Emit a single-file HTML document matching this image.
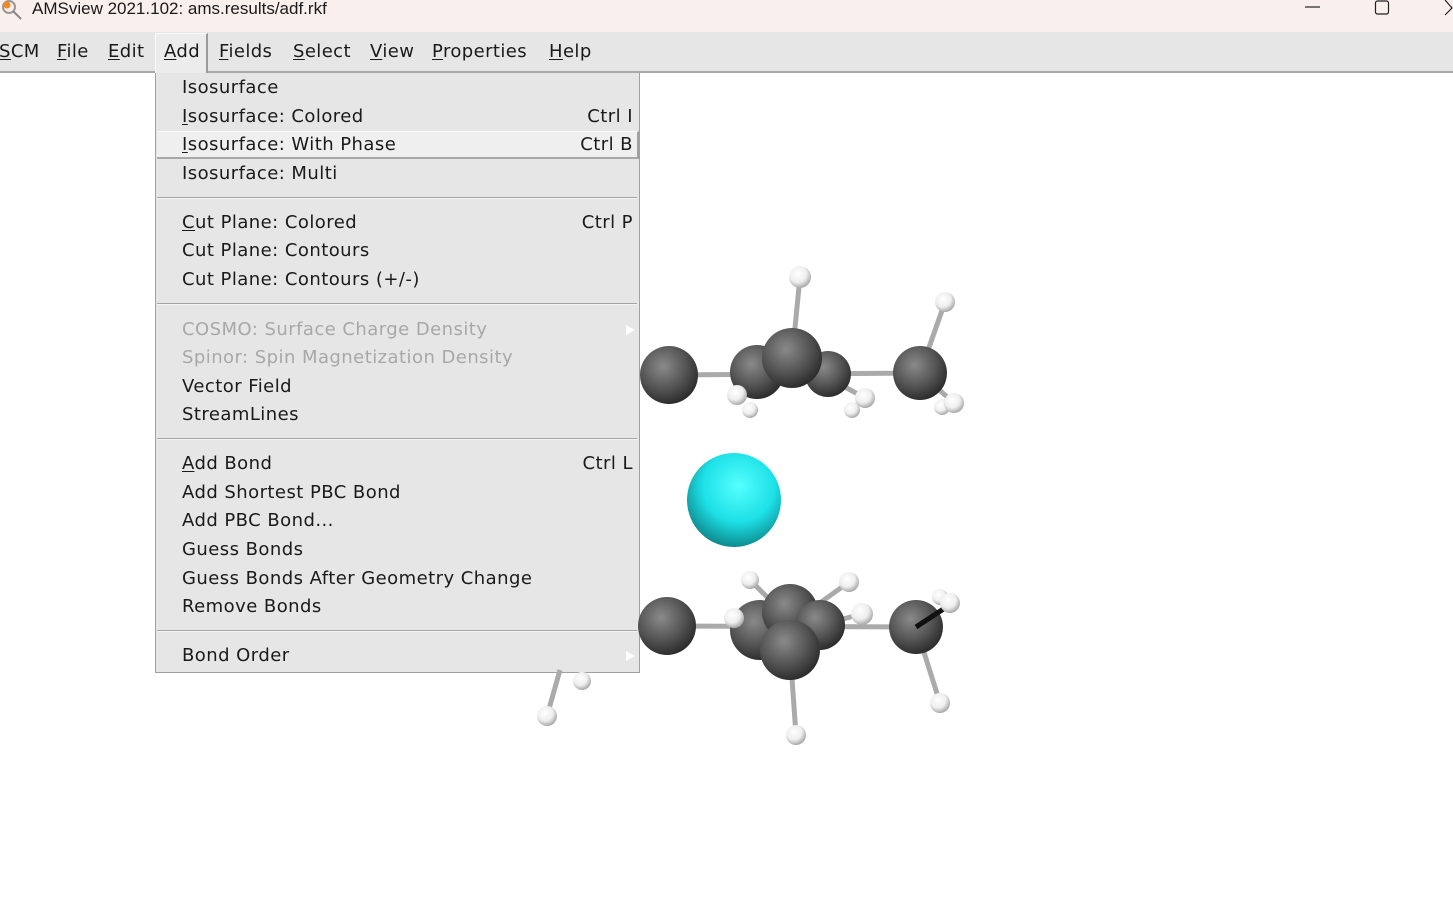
<!DOCTYPE html>
<html><head><meta charset="utf-8"><style>
*{margin:0;padding:0;box-sizing:border-box}
body{width:1453px;height:901px;background:#fff;position:relative;overflow:hidden;font-family:"DejaVu Sans","Liberation Sans",sans-serif;color:#1a1a1a}
#title{position:absolute;left:0;top:0;width:1453px;height:32px;background:#f9efed;font-family:"Liberation Sans",sans-serif;font-size:17px}
#title span{position:absolute;left:32px;top:-1px}
#menubar{position:absolute;left:0;top:32px;width:1453px;height:41px;background:#e6e6e6;border-bottom:2px solid #a8a8a8;font-size:18px;letter-spacing:0.4px}
#menubar span{position:absolute;top:9px}
u{text-decoration:underline;text-underline-offset:2px}
#addbtn{position:absolute;left:155px;top:1px;width:53px;height:40px;background:#ececec;border:1px solid #fafafa;border-right:2px solid #9a9a9a;border-bottom:none}
#menu{position:absolute;left:155px;top:73px;width:485px;height:600px;background:#e6e6e6;border:1px solid #a0a0a0;border-top:none;font-size:18px;letter-spacing:0.45px}
.it{position:absolute;left:26px;white-space:nowrap}
.sc{position:absolute;right:6px;white-space:nowrap}
.dis{color:#a8a8a8}
.sep{position:absolute;left:1px;right:2px;height:2px;border-top:1px solid #a4a4a4;border-bottom:1px solid #f4f4f4}
#hl{position:absolute;left:1px;top:58px;width:482px;height:28px;background:#efefef;border-top:1px solid #fafafa;border-bottom:2px solid #a8a8a8;border-right:2px solid #a0a0a0}
.arr{position:absolute;right:4px;width:0;height:0;border-left:9px solid #fff;border-top:5px solid transparent;border-bottom:5px solid transparent}
</style></head><body>
<div id="title">
<svg style="position:absolute;left:0;top:0" width="24" height="20"><circle cx="9" cy="7" r="6" fill="none" stroke="#999" stroke-width="2"/><circle cx="7" cy="5" r="3.5" fill="#f08a20"/><line x1="13" y1="11" x2="21" y2="19" stroke="#888" stroke-width="2"/></svg>
<span>AMSview 2021.102: ams.results/adf.rkf</span>
<svg style="position:absolute;left:1300px;top:0" width="153" height="20"><line x1="5" y1="7" x2="20" y2="7" stroke="#222" stroke-width="1.2"/><rect x="75.5" y="1" width="13" height="13" rx="2" fill="none" stroke="#222" stroke-width="1.2"/><path d="M145 0 L152 8 L145 15" fill="none" stroke="#222" stroke-width="1.2"/></svg>
</div>
<div id="menubar">
<div id="addbtn"></div>
<span style="left:-1px"><u>S</u>CM</span>
<span style="left:57px"><u>F</u>ile</span>
<span style="left:108px"><u>E</u>dit</span>
<span style="left:164px"><u>A</u>dd</span>
<span style="left:219px"><u>F</u>ields</span>
<span style="left:293px"><u>S</u>elect</span>
<span style="left:370px"><u>V</u>iew</span>
<span style="left:432px"><u>P</u>roperties</span>
<span style="left:549px"><u>H</u>elp</span>
</div>
<div id="menu">
<div id="hl"></div>
<div class="it" style="top:4px">Isosurface</div>
<div class="it" style="top:33px"><u>I</u>sosurface: Colored</div><div class="sc" style="top:33px">Ctrl I</div>
<div class="it" style="top:61px"><u>I</u>sosurface: With Phase</div><div class="sc" style="top:61px">Ctrl B</div>
<div class="it" style="top:90px">Isosurface: Multi</div>
<div class="sep" style="top:124px"></div>
<div class="it" style="top:139px"><u>C</u>ut Plane: Colored</div><div class="sc" style="top:139px">Ctrl P</div>
<div class="it" style="top:167px">Cut Plane: Contours</div>
<div class="it" style="top:196px">Cut Plane: Contours (+/-)</div>
<div class="sep" style="top:230px"></div>
<div class="it dis" style="top:246px">COSMO: Surface Charge Density</div><div class="arr" style="top:252px"></div>
<div class="it dis" style="top:274px">Spinor: Spin Magnetization Density</div>
<div class="it" style="top:303px">Vector Field</div>
<div class="it" style="top:331px">StreamLines</div>
<div class="sep" style="top:365px"></div>
<div class="it" style="top:380px"><u>A</u>dd Bond</div><div class="sc" style="top:380px">Ctrl L</div>
<div class="it" style="top:409px">Add Shortest PBC Bond</div>
<div class="it" style="top:437px">Add PBC Bond...</div>
<div class="it" style="top:466px">Guess Bonds</div>
<div class="it" style="top:495px">Guess Bonds After Geometry Change</div>
<div class="it" style="top:523px">Remove Bonds</div>
<div class="sep" style="top:557px"></div>
<div class="it" style="top:572px">Bond Order</div><div class="arr" style="top:578px"></div>
</div>
<svg style="position:absolute;left:0;top:0" width="1453" height="901">
<defs>
<radialGradient id="c" cx="0.4" cy="0.35" r="0.65"><stop offset="0" stop-color="#8a8a8a"/><stop offset="0.6" stop-color="#555"/><stop offset="1" stop-color="#2e2e2e"/></radialGradient>
<radialGradient id="h" cx="0.4" cy="0.35" r="0.65"><stop offset="0" stop-color="#fff"/><stop offset="0.6" stop-color="#eee"/><stop offset="1" stop-color="#aaa"/></radialGradient>
<radialGradient id="k" cx="0.55" cy="0.35" r="0.7"><stop offset="0" stop-color="#5ff"/><stop offset="0.55" stop-color="#1de0e6"/><stop offset="1" stop-color="#0a7c80"/></radialGradient>
</defs>
<g stroke="#aaa" stroke-width="5">
<line x1="669" y1="375" x2="920" y2="373"/><line x1="800" y1="277" x2="792" y2="358"/><line x1="945" y1="302" x2="920" y2="373"/><line x1="920" y1="373" x2="954" y2="403"/><line x1="792" y1="358" x2="737" y2="395"/><line x1="792" y1="358" x2="865" y2="398"/>
<line x1="667" y1="626" x2="916" y2="627"/><line x1="750" y1="580" x2="780" y2="610"/><line x1="849" y1="582" x2="810" y2="610"/><line x1="790" y1="650" x2="734" y2="618"/><line x1="820" y1="625" x2="862" y2="614"/><line x1="916" y1="627" x2="940" y2="703"/><line x1="790" y1="650" x2="796" y2="735"/><line x1="560" y1="670" x2="547" y2="716"/>
</g>
<g fill="url(#h)"><circle cx="942" cy="407" r="8"/><circle cx="750" cy="410" r="8"/><circle cx="852" cy="410" r="8"/><circle cx="800" cy="277" r="11"/><circle cx="945" cy="302" r="10"/></g>
<g fill="url(#c)"><circle cx="669" cy="375" r="29"/><circle cx="757" cy="372" r="27"/><circle cx="828" cy="374" r="23"/><circle cx="920" cy="373" r="27"/><circle cx="792" cy="358" r="30"/></g>
<g fill="url(#h)"><circle cx="737" cy="395" r="10"/><circle cx="865" cy="398" r="10"/><circle cx="954" cy="403" r="10"/></g>
<circle cx="734" cy="500" r="47" fill="url(#k)"/>
<g fill="url(#h)"><circle cx="750" cy="580" r="9"/><circle cx="849" cy="582" r="10"/><circle cx="940" cy="597" r="8"/><circle cx="582" cy="681" r="9"/></g>
<g fill="url(#c)"><circle cx="667" cy="626" r="29"/><circle cx="760" cy="630" r="30"/><circle cx="790" cy="612" r="28"/><circle cx="820" cy="625" r="25"/><circle cx="916" cy="627" r="27"/><circle cx="790" cy="650" r="30"/></g>
<line x1="916" y1="627" x2="945" y2="608" stroke="#111" stroke-width="5"/>
<g fill="url(#h)"><circle cx="734" cy="618" r="10"/><circle cx="862" cy="614" r="11"/><circle cx="950" cy="603" r="10"/><circle cx="940" cy="703" r="10"/><circle cx="796" cy="735" r="10"/><circle cx="547" cy="716" r="10"/></g>
</svg>
</body></html>
